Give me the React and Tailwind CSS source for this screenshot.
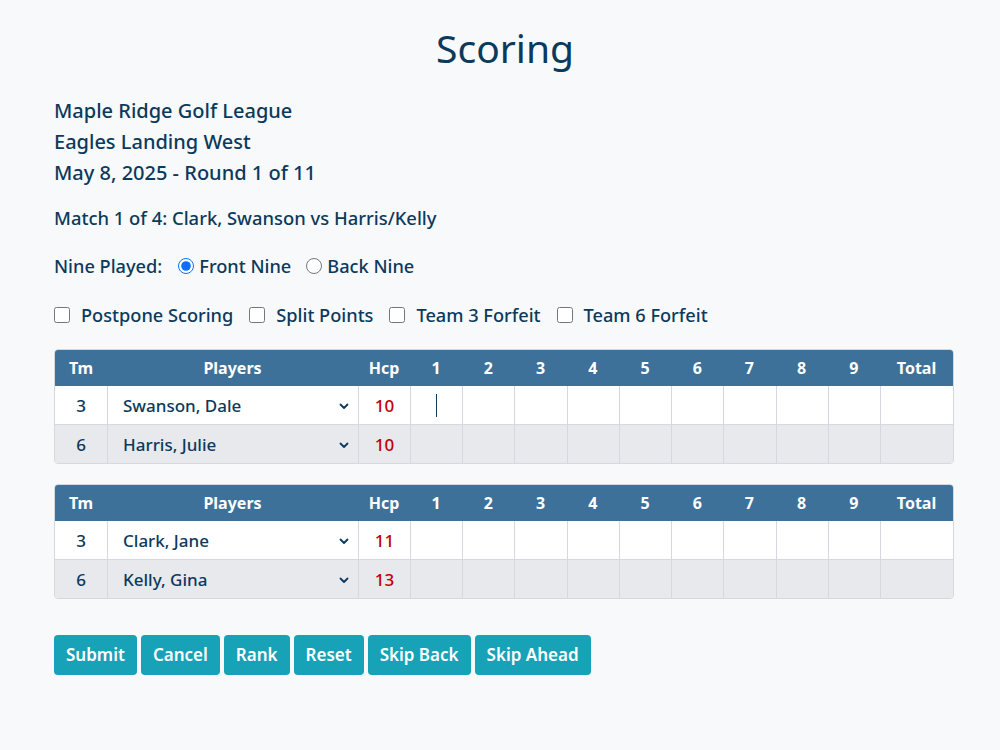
import React from "react";

const holes = [1, 2, 3, 4, 5, 6, 7, 8, 9];

function Chevron() {
  return (
    <svg width="10" height="8" viewBox="0 0 10 8" className="shrink-0">
      <path d="M1.5 2.5 L5 6 L8.5 2.5" fill="none" stroke="#0b3a5c" strokeWidth="1.8" strokeLinecap="round" strokeLinejoin="round" />
    </svg>
  );
}

function ScoreTable({ rows }) {
  return (
    <div className="w-[900px] rounded-[4px] border border-[#d5d8dc] overflow-hidden">
      <div className="grid grid-cols-[52px_251px_52px_repeat(9,1fr)_73px] bg-[#3e7199] text-white font-bold text-[16px] h-[36px] items-center">
        <div className="text-center">Tm</div>
        <div className="text-center">Players</div>
        <div className="text-center">Hcp</div>
        {holes.map((h) => (
          <div key={h} className="text-center">{h}</div>
        ))}
        <div className="text-center">Total</div>
      </div>
      {rows.map((r, i) => (
        <div
          key={i}
          className={`grid grid-cols-[52px_251px_52px_repeat(9,1fr)_73px] ${i === 0 ? "bg-white h-[38px]" : "bg-[#e8e9ec] h-[39px] border-t border-[#d5d8dc]"}`}
        >
          <div className="flex items-center justify-center pt-[2px] text-[17px] font-medium text-[#0b3a5c]">{r.tm}</div>
          <div className="flex items-center justify-between pl-[15px] pr-[9px] pt-[2px] border-l border-[#d5d8dc] text-[17px] font-medium text-[#0b3a5c]">
            <span>{r.name}</span>
            <Chevron />
          </div>
          <div className="flex items-center justify-center pt-[2px] border-l border-[#d5d8dc] text-[17px] font-medium text-[#c00000]">{r.hcp}</div>
          {holes.map((h) => (
            <div key={h} className="flex items-center justify-center border-l border-[#d5d8dc]">
              {r.cursor && h === 1 ? <div className="w-[1.5px] h-[23px] bg-[#0b3a5c]" /> : null}
            </div>
          ))}
          <div className="border-l border-[#d5d8dc]" />
        </div>
      ))}
    </div>
  );
}

export default function App() {
  const font = { fontFamily: '"Noto Sans", "Open Sans", sans-serif' };
  return (
    <div className="min-h-[750px] bg-[#f8f9fa] text-[#0b3a5c]" style={font}>
      <div className="w-[900px] ml-[54px] pt-[22px]">
        <h1 className="text-center text-[39px] leading-[52px] text-[#0b3a5c] pl-[2px]">Scoring</h1>
        <div className="mt-[21px] text-[20px] leading-[31px] font-medium">
          <div>Maple Ridge Golf League</div>
          <div>Eagles Landing West</div>
          <div>May 8, 2025 - Round 1 of 11</div>
        </div>
        <div className="mt-[17px] text-[18.4px] leading-[26px] font-medium">Match 1 of 4: Clark, Swanson vs Harris/Kelly</div>
        <div className="mt-[21px] flex items-center text-[18.2px] leading-[28px] font-medium">
          <span className="mr-[16px]">Nine Played:</span>
          <label className="flex items-center mr-[15px]">
            <input type="radio" name="nine" defaultChecked className="w-[16px] h-[16px] m-0 mr-[5px] accent-[#0d6efd]" />
            Front Nine
          </label>
          <label className="flex items-center">
            <input type="radio" name="nine" className="w-[16px] h-[16px] m-0 mr-[5px]" />
            Back Nine
          </label>
        </div>
        <div className="mt-[21px] flex items-center text-[18.2px] leading-[28px] font-medium">
          {["Postpone Scoring", "Split Points", "Team 3 Forfeit", "Team 6 Forfeit"].map((t) => (
            <label key={t} className="flex items-center mr-[16px]">
              <input type="checkbox" className="w-[16px] h-[16px] m-0 mr-[11px]" />
              {t}
            </label>
          ))}
        </div>
        <div className="mt-[20px]">
          <ScoreTable
            rows={[
              { tm: 3, name: "Swanson, Dale", hcp: 10, cursor: true },
              { tm: 6, name: "Harris, Julie", hcp: 10 },
            ]}
          />
        </div>
        <div className="mt-[20px]">
          <ScoreTable
            rows={[
              { tm: 3, name: "Clark, Jane", hcp: 11 },
              { tm: 6, name: "Kelly, Gina", hcp: 13 },
            ]}
          />
        </div>
        <div className="mt-[36px] flex gap-[4px]">
          {["Submit", "Cancel", "Rank", "Reset", "Skip Back", "Skip Ahead"].map((b) => (
            <button key={b} className="h-[40px] px-[12px] rounded-[4px] bg-[#17a2b8] text-white text-[17px] font-semibold">
              {b}
            </button>
          ))}
        </div>
      </div>
    </div>
  );
}
